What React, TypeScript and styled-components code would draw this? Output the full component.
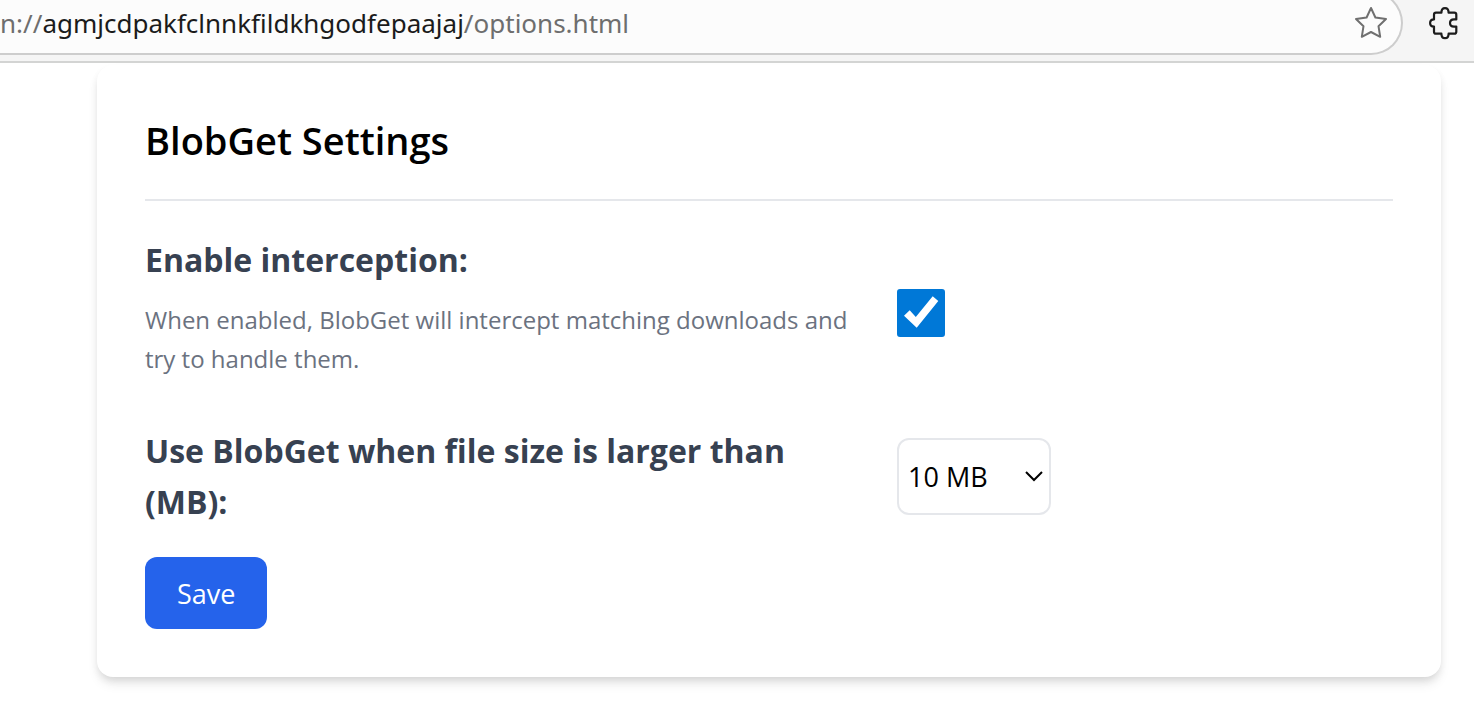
import React, { useState } from "react";
import styled, { createGlobalStyle } from "styled-components";

const GlobalStyle = createGlobalStyle`
  *, *::before, *::after { box-sizing: border-box; }
  body {
    margin: 0;
    background: #fff;
    color: #000;
    font-family: "Segoe UI", "Open Sans", "Noto Sans", sans-serif;
  }
`;

const Toolbar = styled.header`
  display: flex;
  align-items: flex-end;
  height: 63px;
  padding-bottom: 6px;
  overflow: hidden;
  background: #f5f5f5;
  border-bottom: 2px solid #d3d4d3;
`;

const AddressBar = styled.div`
  flex: 1;
  display: flex;
  align-items: center;
  justify-content: space-between;
  height: 64px;
  padding-right: 13px;
  background: #fcfcfc;
  border: 2px solid #cdcdcd;
  border-left: 0;
  border-radius: 0 32px 32px 0;
`;

const Url = styled.span`
  color: #6e6e6e;
  font-family: "Segoe UI", "Noto Sans", sans-serif;
  font-size: 26px;
  line-height: 36px;
  white-space: nowrap;
`;

const Host = styled.span`
  color: #1b1b1b;
`;

const IconButton = styled.button`
  display: flex;
  padding: 0;
  border: 0;
  background: none;
`;

const Extensions = styled.div`
  display: flex;
  align-items: center;
  height: 64px;
  padding: 0 13px 0 24px;
`;

const Page = styled.main`
  padding: 2px 33px 39px 97px;
`;

const Card = styled.form`
  padding: 47px 48px 48px;
  background: #fff;
  border-radius: 16px;
  box-shadow: 0 8px 12px -2px rgba(0, 0, 0, 0.1), 0 4px 8px -2px rgba(0, 0, 0, 0.1);
`;

const Title = styled.h1`
  margin: 0 0 33px;
  padding-bottom: 31px;
  border-bottom: 2px solid #e5e7eb;
  font-size: 38px;
  font-weight: 600;
  line-height: 56px;
`;

const Fields = styled.div`
  display: grid;
  row-gap: 33px;
  margin-bottom: 30px;
`;

const Row = styled.div`
  display: grid;
  grid-template-columns: 3fr 2fr;
  column-gap: 8px;
  align-items: center;
`;

const Description = styled.div`
  padding-right: 32px;
`;

const Label = styled.label`
  display: block;
  color: #374151;
  font-size: 32px;
  font-weight: 700;
  line-height: 51px;
`;

const Hint = styled.p`
  margin: 15px 0 14px;
  color: #6b7280;
  font-size: 24px;
  line-height: 39px;
`;

const Control = styled.div`
  display: grid;
  justify-content: start;
  align-items: center;

  > * { grid-area: 1 / 1; }
  > svg { pointer-events: none; }
`;

const Checkbox = styled.input`
  appearance: none;
  width: 48px;
  height: 48px;
  margin: 0;
  border: 2px solid #767676;
  border-radius: 3px;
  background: #fff;

  &:checked {
    border-color: #0078d7;
    background: #0078d7;
  }
`;

const Select = styled.select`
  appearance: none;
  width: 154px;
  height: 77px;
  padding: 0 40px 0 9px;
  border: 2px solid #e5e7eb;
  border-radius: 12px;
  background: #fff;
  color: #000;
  font: 27px "Segoe UI", "Open Sans", "Noto Sans", sans-serif;
`;

const Chevron = styled.svg`
  justify-self: end;
  margin-right: 7px;
`;

const SaveButton = styled.button`
  display: block;
  height: 72px;
  padding: 0 32px;
  border: 0;
  border-radius: 12px;
  background: #2563eb;
  color: #fff;
  font: 27px "Segoe UI", "Open Sans", "Noto Sans", sans-serif;
`;

export default function App() {
  const [enabled, setEnabled] = useState(true);
  const [size, setSize] = useState("10");

  return (
    <>
      <GlobalStyle />
      <Toolbar>
        <AddressBar>
          <Url>
            n://<Host>agmjcdpakfclnnkfildkhgodfepaajaj</Host>/options.html
          </Url>
          <IconButton type="button" aria-label="Add to favorites">
            <svg width="34" height="34" viewBox="0 0 34 34" fill="none" stroke="#707070" strokeWidth="2" strokeLinejoin="round">
              <path d="M17 2 21.4 11.5 32 13 24.5 20.2 26.2 30.8 17 26 7.8 30.8 9.5 20.2 2 13 12.6 11.5Z" />
            </svg>
          </IconButton>
        </AddressBar>
        <Extensions>
          <IconButton type="button" aria-label="Extensions">
            <svg width="34" height="34" viewBox="0 0 34 34" fill="none" stroke="#1c1c1c" strokeWidth="2.2" strokeLinejoin="round">
              <path d="M9 6.7H14.4C14.4 3.6 15.8 2.2 18 2.2S21.6 3.6 21.6 6.7H27.3Q29.3 6.7 29.3 8.7V13.4H27C24.6 13.4 23 14.8 23 17S24.6 20.6 27 20.6H29.3V25.7Q29.3 27.7 27.3 27.7H21.6C21.6 30.8 20.2 32.2 18 32.2S14.4 30.8 14.4 27.7H9Q7 27.7 7 25.7V20.6C4.4 20.6 3.1 19.2 3.1 17S4.4 13.4 7 13.4V8.7Q7 6.7 9 6.7Z" />
            </svg>
          </IconButton>
        </Extensions>
      </Toolbar>
      <Page>
        <Card onSubmit={(e) => e.preventDefault()}>
          <Title>BlobGet Settings</Title>
          <Fields>
            <Row>
              <Description>
                <Label htmlFor="enabled">Enable interception:</Label>
                <Hint id="enabled-hint">
                  When enabled, BlobGet will intercept matching downloads and try to handle them.
                </Hint>
              </Description>
              <Control>
                <Checkbox
                  id="enabled"
                  type="checkbox"
                  aria-describedby="enabled-hint"
                  checked={enabled}
                  onChange={(e) => setEnabled(e.target.checked)}
                />
                {enabled && (
                  <svg width="48" height="48" viewBox="0 0 48 48" fill="#fff" aria-hidden="true">
                    <path d="M7 26.8 12.7 21.3 18.8 28 35.7 7.3 41.3 12 19.7 38.7Z" />
                  </svg>
                )}
              </Control>
            </Row>
            <Row>
              <Description>
                <Label htmlFor="size">Use BlobGet when file size is larger than (MB):</Label>
              </Description>
              <Control>
                <Select id="size" value={size} onChange={(e) => setSize(e.target.value)}>
                  <option value="5">5 MB</option>
                  <option value="10">10 MB</option>
                  <option value="50">50 MB</option>
                </Select>
                <Chevron width="20" height="12" viewBox="0 0 20 12" fill="none" stroke="#000" strokeWidth="2" aria-hidden="true">
                  <path d="M2 2 10 10 18 2" />
                </Chevron>
              </Control>
            </Row>
          </Fields>
          <SaveButton type="submit">Save</SaveButton>
        </Card>
      </Page>
    </>
  );
}
